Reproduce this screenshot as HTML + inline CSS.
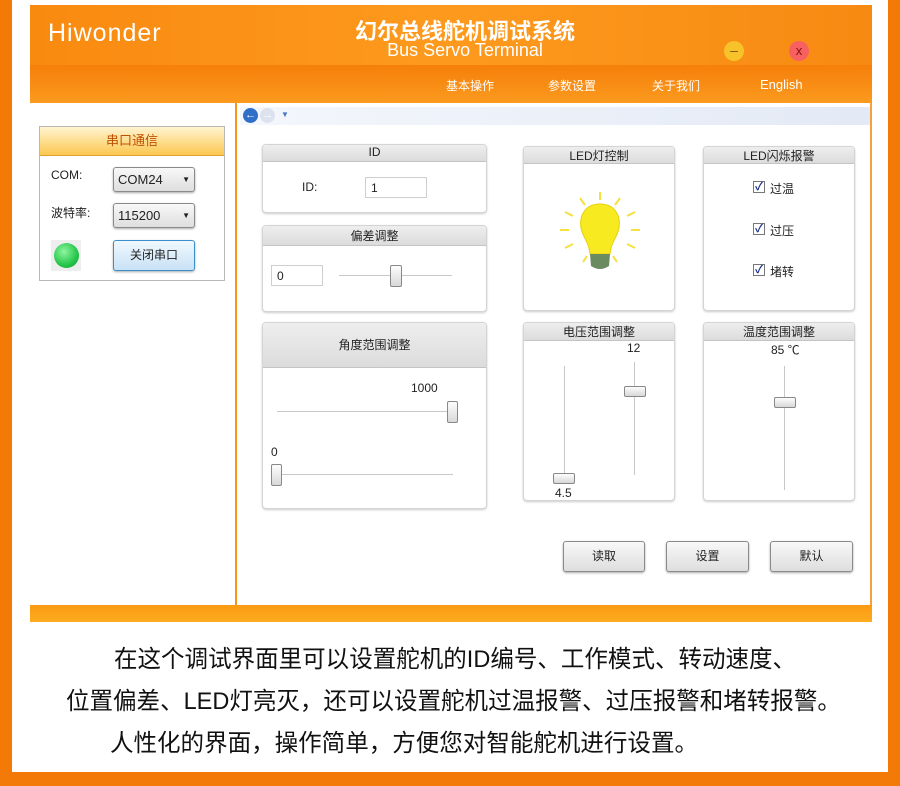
<!DOCTYPE html>
<html><head><meta charset="utf-8"><style>
*{margin:0;padding:0;box-sizing:border-box}
body{width:900px;height:786px;position:relative;background:#fff;font-family:"Liberation Sans","Noto Sans CJK SC",sans-serif;overflow:hidden;color:#222}
.a{position:absolute}
.pan{position:absolute;background:#fff;border:1px solid #d4d4d4;border-radius:4px;box-shadow:0 1px 2px #ccc}
.ph{position:absolute;left:0;right:0;top:0;background:linear-gradient(#eee,#dcdcdc);border-bottom:1px solid #c4c4c4;text-align:center;font-size:12px;border-radius:4px 4px 0 0}
.btn{position:absolute;border:1px solid #8a8a8a;border-radius:3px;background:linear-gradient(#f8f8f8,#dedede);font-size:12px;text-align:center;box-shadow:0 1px 2px #aaa}
.trk{position:absolute;background:#c8c8c8}
.th{position:absolute;border:1px solid #888;border-radius:2px;background:linear-gradient(#fdfdfd,#d8d8d8)}
.inp{position:absolute;border:1px solid #cfcfcf;background:#fff;font-size:12px;padding:3px 5px}
.cb{position:absolute;width:12px;height:12px;border:1px solid #777;background:#fff;font-size:11px;line-height:10px;text-align:center;color:#1a2f8c;font-weight:bold}
.t{position:absolute;font-size:12px}
.bt{position:absolute;font-size:24px;line-height:26px;color:#111;white-space:nowrap;transform:scaleX(0.98);transform-origin:left}
</style></head><body>
<div class="a" style="left:0;top:0;width:12px;height:786px;background:#f47a08"></div>
<div class="a" style="right:0;top:0;width:12px;height:786px;background:#f47a08"></div>
<div class="a" style="left:0;top:772px;width:900px;height:14px;background:#f47a08"></div>
<div class="a" style="left:30px;top:5px;width:842px;height:62px;background:linear-gradient(90deg,#f98a10,#fd9a1e 50%,#f78a12)"></div>
<div class="a" style="left:30px;top:65px;width:842px;height:38px;background:linear-gradient(#f57f0a,#fb9a1e)"></div>
<div class="a" style="left:48px;top:19px;color:#fff;font-size:25px;letter-spacing:1px">Hiwonder</div>
<div class="a" style="left:300px;top:14px;width:330px;text-align:center;color:#fff;font-size:22px;font-weight:bold">幻尔总线舵机调试系统</div>
<div class="a" style="left:300px;top:40px;width:330px;text-align:center;color:#fff;font-size:18px">Bus Servo Terminal</div>
<div class="a" style="left:724px;top:41px;width:20px;height:20px;border-radius:50%;background:#f7c22a;color:#7a5a00;font-size:14px;text-align:center;line-height:18px">–</div>
<div class="a" style="left:789px;top:41px;width:20px;height:20px;border-radius:50%;background:#f76060;color:#8a1010;font-size:13px;text-align:center;line-height:19px">x</div>
<div class="a" style="left:446px;top:77px;color:#fff;font-size:12px">基本操作</div>
<div class="a" style="left:548px;top:77px;color:#fff;font-size:12px">参数设置</div>
<div class="a" style="left:652px;top:77px;color:#fff;font-size:12px">关于我们</div>
<div class="a" style="left:760px;top:77px;color:#fff;font-size:13px">English</div>
<div class="a" style="left:30px;top:103px;width:842px;height:502px;background:#fff;border-right:2px solid #f5a040"></div>
<div class="a" style="left:235px;top:103px;width:2px;height:502px;background:#f5951e"></div>
<div class="a" style="left:240px;top:107px;width:630px;height:18px;background:linear-gradient(90deg,#f4f7fc,#e3e9f5)"></div>
<div class="a" style="left:243px;top:108px;width:15px;height:15px;border-radius:50%;background:#2f6fc7;color:#fff;font-size:11px;text-align:center;line-height:14px">←</div>
<div class="a" style="left:260px;top:108px;width:15px;height:15px;border-radius:50%;background:#dde3ee;color:#fff;font-size:11px;text-align:center;line-height:14px">→</div>
<div class="a" style="left:281px;top:110px;font-size:8px;color:#4a78c0">▼</div>
<div class="a" style="left:30px;top:605px;width:842px;height:17px;background:linear-gradient(#fb9a12,#fdac20)"></div>
<div class="a" style="left:39px;top:126px;width:186px;height:155px;border:1px solid #b8b8b8;background:#fff"></div>
<div class="a" style="left:40px;top:127px;width:184px;height:29px;background:linear-gradient(#fff4d0,#fcc850);border-bottom:1px solid #e0a030;text-align:center;font-size:13px;color:#c05000;line-height:28px">串口通信</div>
<div class="t" style="left:51px;top:168px">COM:</div>
<div class="t" style="left:51px;top:204px">波特率:</div>
<div class="btn" style="left:113px;top:167px;width:82px;height:25px;text-align:left;padding:4px 4px;font-size:13px">COM24<span style="float:right;font-size:8px;margin-top:3px">▼</span></div>
<div class="btn" style="left:113px;top:203px;width:82px;height:25px;text-align:left;padding:4px 4px;font-size:13px">115200<span style="float:right;font-size:8px;margin-top:3px">▼</span></div>
<div class="a" style="left:51px;top:240px;width:30px;height:31px;background:#eee"></div>
<div class="a" style="left:54px;top:243px;width:25px;height:25px;border-radius:50%;background:radial-gradient(circle at 40% 35%,#8ff5a0,#25c64a 60%,#189a35)"></div>
<div class="btn" style="left:113px;top:240px;width:82px;height:31px;border:1px solid #3b8fc8;background:linear-gradient(#f0f8ff,#c8e2f6);line-height:28px">关闭串口</div>
<div class="pan" style="left:262px;top:144px;width:225px;height:69px"><div class="ph" style="height:17px">ID</div></div>
<div class="t" style="left:302px;top:180px">ID:</div>
<div class="inp" style="left:365px;top:177px;width:62px;height:21px">1</div>
<div class="pan" style="left:262px;top:225px;width:225px;height:87px"><div class="ph" style="height:20px;line-height:20px">偏差调整</div></div>
<div class="inp" style="left:271px;top:265px;width:52px;height:21px">0</div>
<div class="trk" style="left:339px;top:275px;width:113px;height:1px"></div>
<div class="th" style="left:390px;top:265px;width:12px;height:22px"></div>
<div class="pan" style="left:262px;top:322px;width:225px;height:187px"><div class="ph" style="height:45px;line-height:45px">角度范围调整</div></div>
<div class="t" style="left:411px;top:381px">1000</div>
<div class="trk" style="left:277px;top:411px;width:180px;height:1px"></div>
<div class="th" style="left:447px;top:401px;width:11px;height:22px"></div>
<div class="t" style="left:271px;top:445px">0</div>
<div class="trk" style="left:277px;top:474px;width:176px;height:1px"></div>
<div class="th" style="left:271px;top:464px;width:11px;height:22px"></div>
<div class="pan" style="left:523px;top:146px;width:152px;height:165px"><div class="ph" style="height:17px">LED灯控制</div></div>
<svg class="a" style="left:555px;top:190px" width="90" height="90" viewBox="0 0 90 90">
<g stroke="#f5e040" stroke-width="2"><line x1="45" y1="2" x2="45" y2="10"/><line x1="25" y1="8" x2="30" y2="15"/><line x1="65" y1="8" x2="60" y2="15"/><line x1="10" y1="22" x2="18" y2="26"/><line x1="80" y1="22" x2="72" y2="26"/><line x1="5" y1="40" x2="14" y2="40"/><line x1="85" y1="40" x2="76" y2="40"/><line x1="10" y1="58" x2="18" y2="54"/><line x1="80" y1="58" x2="72" y2="54"/><line x1="28" y1="72" x2="32" y2="66"/><line x1="62" y1="72" x2="58" y2="66"/></g>
<path d="M45 14 C30 14 24 26 26 38 C28 48 34 52 35 64 L55 64 C56 52 62 48 64 38 C66 26 60 14 45 14Z" fill="#f8ea20" stroke="#e8d010"/>
<path d="M35 64 L55 64 L54 76 Q45 82 36 76Z" fill="#6a8a60"/>
</svg>
<div class="pan" style="left:703px;top:146px;width:152px;height:165px"><div class="ph" style="height:17px">LED闪烁报警</div></div>
<div class="cb" style="left:753px;top:181px">✓</div><div class="t" style="left:770px;top:180px">过温</div>
<div class="cb" style="left:753px;top:223px">✓</div><div class="t" style="left:770px;top:222px">过压</div>
<div class="cb" style="left:753px;top:264px">✓</div><div class="t" style="left:770px;top:263px">堵转</div>
<div class="pan" style="left:523px;top:322px;width:152px;height:179px"><div class="ph" style="height:18px">电压范围调整</div></div>
<div class="t" style="left:627px;top:341px">12</div>
<div class="trk" style="left:634px;top:362px;width:1px;height:113px"></div>
<div class="th" style="left:624px;top:386px;width:22px;height:11px"></div>
<div class="trk" style="left:564px;top:366px;width:1px;height:113px"></div>
<div class="th" style="left:553px;top:473px;width:22px;height:11px"></div>
<div class="t" style="left:555px;top:486px">4.5</div>
<div class="pan" style="left:703px;top:322px;width:152px;height:179px"><div class="ph" style="height:18px">温度范围调整</div></div>
<div class="t" style="left:771px;top:341px">85 ℃</div>
<div class="trk" style="left:784px;top:366px;width:1px;height:124px"></div>
<div class="th" style="left:774px;top:397px;width:22px;height:11px"></div>
<div class="btn" style="left:563px;top:541px;width:82px;height:31px;line-height:29px">读取</div>
<div class="btn" style="left:666px;top:541px;width:83px;height:31px;line-height:29px">设置</div>
<div class="btn" style="left:770px;top:541px;width:83px;height:31px;line-height:29px">默认</div>
<div class="bt" style="left:114px;top:647px">在这个调试界面里可以设置舵机的ID编号、工作模式、转动速度、</div>
<div class="bt" style="left:66px;top:689px">位置偏差、LED灯亮灭，还可以设置舵机过温报警、过压报警和堵转报警。</div>
<div class="bt" style="left:110px;top:731px">人性化的界面，操作简单，方便您对智能舵机进行设置。</div>
</body></html>
